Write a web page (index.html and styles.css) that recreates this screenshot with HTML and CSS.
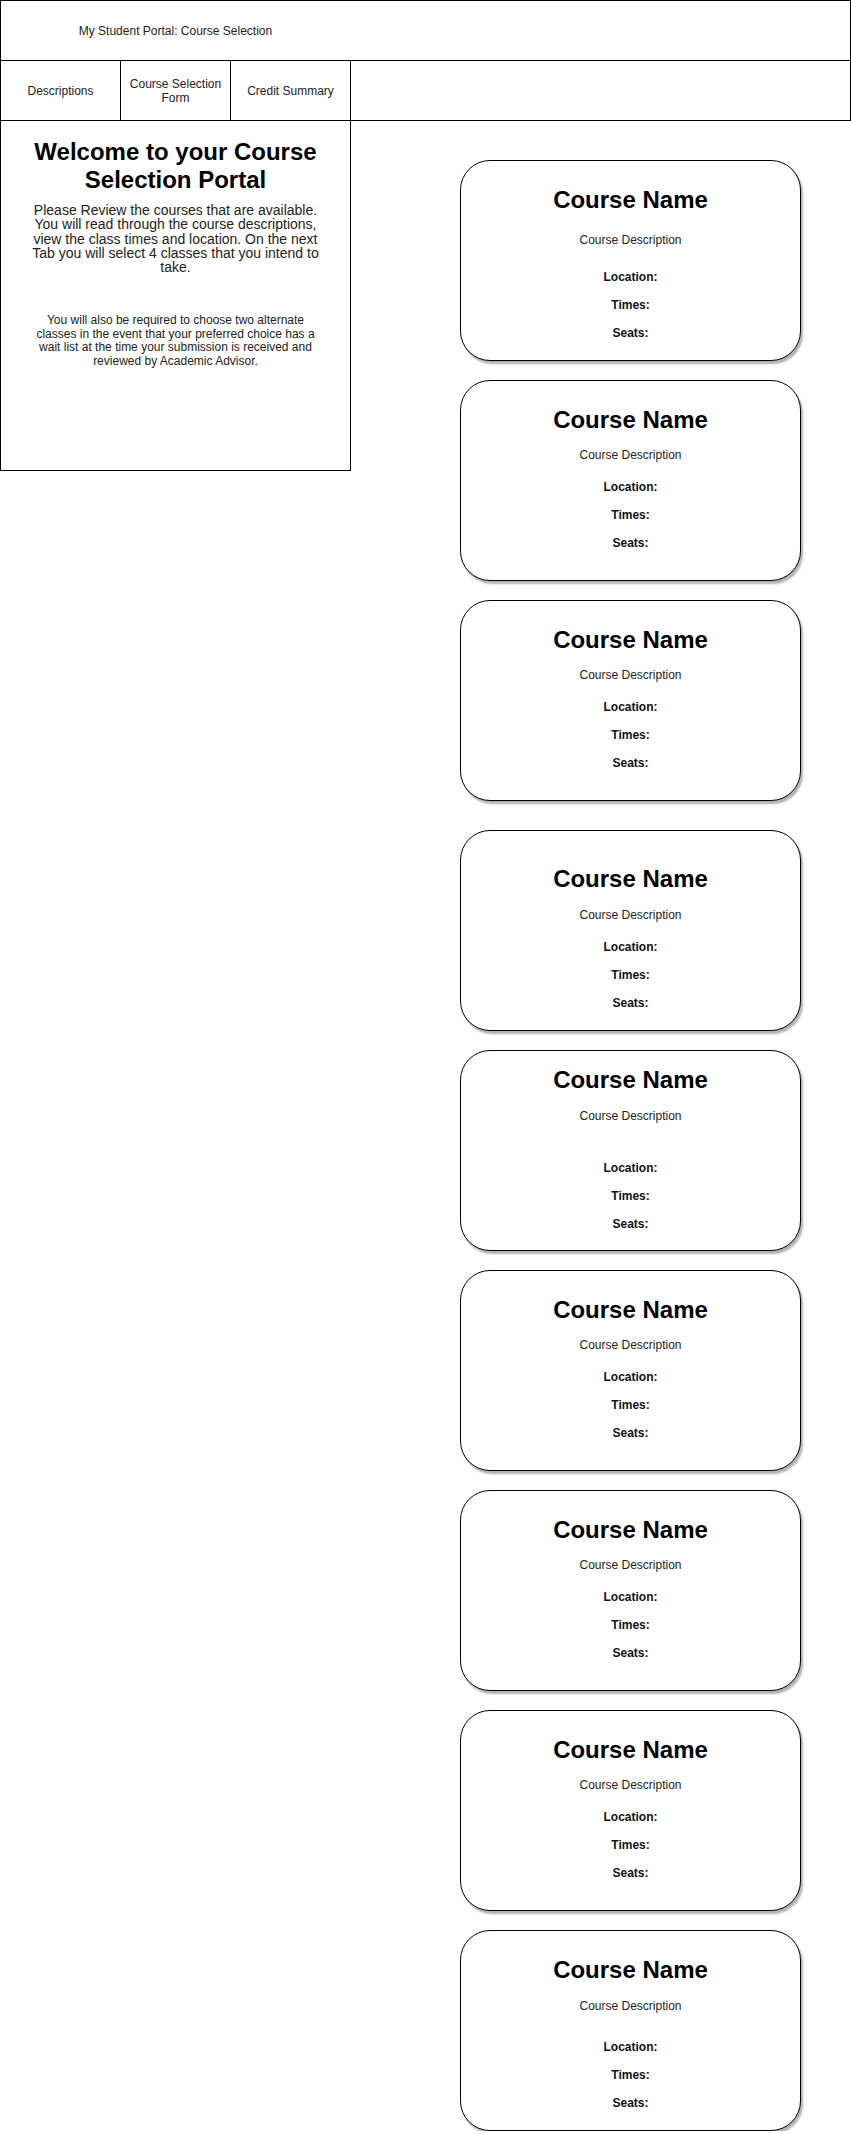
FILE: index.html
```html
<!DOCTYPE html>
<html lang="en">
<head>
    <meta charset="UTF-8">
    <meta name="viewport" content="width=device-width, initial-scale=1.0">
    <title>My Student Portal: Course Selection</title>
    <link rel="stylesheet" href="styles.css">
</head>
<body>
    <!-- Header Section -->
    <div class="header">
        <div class="header-title">My Student Portal: Course Selection</div>
    </div>
    <!-- Tabs -->
    <nav class="tabs">
        <div class="tab tab-descriptions">Descriptions</div>
        <div class="tab tab-form">Course Selection Form</div>
        <div class="tab tab-credits">Credit Summary</div>
        <div class="tab tab-empty"></div>
    </nav>
    <div class="main">
        <!-- Welcome Panel -->
        <div class="welcome">
            <h1>Welcome to your Course Selection Portal</h1>
            <p class="intro">Please Review the courses that are available. You will read through the course descriptions, view the class times and location. On the next Tab you will select 4 classes that you intend to take.</p>
            <p class="note">You will also be required to choose two alternate classes in the event that your preferred choice has a wait list at the time your submission is received and reviewed by Academic Advisor.</p>
        </div>
        <!-- Course Cards -->
        <div class="course-list">
            <div class="course-card course-card--first">
                <h2>Course Name</h2>
                <p class="course-desc">Course Description</p>
                <div class="course-details">
                    <span>Location:</span>
                    <span>Times:</span>
                    <span>Seats:</span>
                </div>
            </div>
            <div class="course-card">
                <h2>Course Name</h2>
                <p class="course-desc">Course Description</p>
                <div class="course-details">
                    <span>Location:</span>
                    <span>Times:</span>
                    <span>Seats:</span>
                </div>
            </div>
            <div class="course-card">
                <h2>Course Name</h2>
                <p class="course-desc">Course Description</p>
                <div class="course-details">
                    <span>Location:</span>
                    <span>Times:</span>
                    <span>Seats:</span>
                </div>
            </div>
            <div class="course-card course-card--shifted">
                <h2>Course Name</h2>
                <p class="course-desc">Course Description</p>
                <div class="course-details">
                    <span>Location:</span>
                    <span>Times:</span>
                    <span>Seats:</span>
                </div>
            </div>
            <div class="course-card course-card--spaced">
                <h2>Course Name</h2>
                <p class="course-desc">Course Description</p>
                <div class="course-details">
                    <span>Location:</span>
                    <span>Times:</span>
                    <span>Seats:</span>
                </div>
            </div>
            <div class="course-card">
                <h2>Course Name</h2>
                <p class="course-desc">Course Description</p>
                <div class="course-details">
                    <span>Location:</span>
                    <span>Times:</span>
                    <span>Seats:</span>
                </div>
            </div>
            <div class="course-card">
                <h2>Course Name</h2>
                <p class="course-desc">Course Description</p>
                <div class="course-details">
                    <span>Location:</span>
                    <span>Times:</span>
                    <span>Seats:</span>
                </div>
            </div>
            <div class="course-card">
                <h2>Course Name</h2>
                <p class="course-desc">Course Description</p>
                <div class="course-details">
                    <span>Location:</span>
                    <span>Times:</span>
                    <span>Seats:</span>
                </div>
            </div>
            <div class="course-card course-card--last">
                <h2>Course Name</h2>
                <p class="course-desc">Course Description</p>
                <div class="course-details">
                    <span>Location:</span>
                    <span>Times:</span>
                    <span>Seats:</span>
                </div>
            </div>
        </div>
    </div>
</body>
</html>
```

FILE: styles.css
```css
:root {
    --line-color: #000;
    --text-color: #222;
}
* {
    box-sizing: border-box;
}
body {
    font-family: 'Liberation Sans', Arial, sans-serif;
    background: #fff;
    color: var(--text-color);
    margin: 0;
    padding: 0;
}
.header {
    width: 851px;
    height: 61px;
    border: 1px solid var(--line-color);
    display: flex;
    align-items: center;
}
.header-title {
    width: 349px;
    text-align: center;
    font-size: 12px;
}
.tabs {
    display: flex;
    margin-top: -1px;
    height: 61px;
}
.tab {
    border: 1px solid var(--line-color);
    display: flex;
    align-items: center;
    justify-content: center;
    text-align: center;
    font-size: 12px;
    line-height: 1.15;
    padding: 2px 8px 0;
}
.tab + .tab {
    margin-left: -1px;
}
.tab-descriptions { width: 121px; }
.tab-form { width: 111px; }
.tab-credits { width: 121px; }
.tab-empty { width: 501px; }
.main {
    display: flex;
    align-items: flex-start;
    margin-top: -1px;
}
.welcome {
    width: 351px;
    height: 351px;
    border: 1px solid var(--line-color);
    padding-top: 16.5px;
    text-align: center;
}
.welcome h1 {
    margin: 0 auto;
    width: 300px;
    font-size: 24px;
    line-height: 28.3px;
    font-weight: bold;
    color: #000;
}
.intro {
    width: 300px;
    margin: 8.7px auto 0;
    font-size: 14px;
    line-height: 14.4px;
}
.note {
    width: 290px;
    margin: 39px auto 0;
    font-size: 12px;
    line-height: 13.8px;
}
.course-list {
    margin-left: 109px;
    padding-top: 40px;
}
/* Course Cards */
.course-card {
    width: 341px;
    height: 201px;
    border: 1px solid var(--line-color);
    border-radius: 30px;
    background: #fff;
    box-shadow: 2px 3px 2px rgba(0,0,0,0.3);
    padding-top: 25px;
    display: flex;
    flex-direction: column;
    align-items: center;
    text-align: center;
}
.course-card + .course-card {
    margin-top: 19px;
}
.course-card h2 {
    margin: 0;
    font-size: 24px;
    line-height: 28px;
    font-weight: bold;
    color: #000;
}
.course-desc {
    margin: 14px 0 0;
    font-size: 12px;
    line-height: 14px;
}
.course-details {
    margin-top: 18px;
    display: flex;
    flex-direction: column;
    align-items: center;
    gap: 14px;
    font-size: 12px;
    line-height: 14px;
    font-weight: bold;
    color: #111;
}
.course-card--first .course-desc { margin-top: 19px; }
.course-card--first .course-details { margin-top: 23px; }
.course-card.course-card--shifted {
    margin-top: 29px;
    padding-top: 34px;
}
.course-card--shifted .course-desc { margin-top: 15px; }
.course-card--spaced {
    padding-top: 15px;
}
.course-card--spaced .course-desc { margin-top: 15px; }
.course-card--spaced .course-details { margin-top: 38px; }
.course-card--last .course-desc { margin-top: 15px; }
.course-card--last .course-details { margin-top: 27px; }
```
